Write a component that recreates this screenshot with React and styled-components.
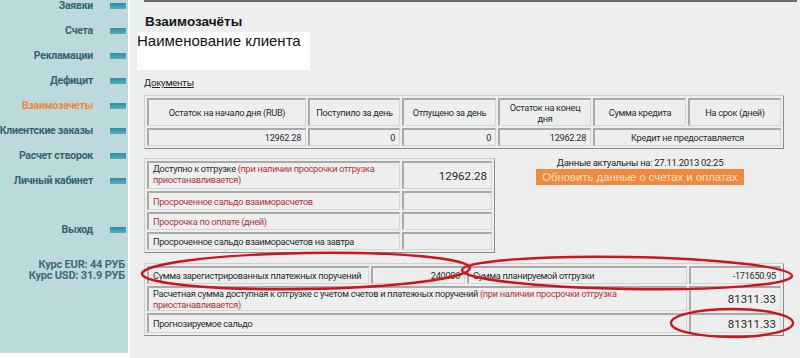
import React from 'react'
import styled, { createGlobalStyle } from 'styled-components'

const GlobalStyle = createGlobalStyle`
  body {
    margin: 0;
    background: #ffffff;
    font-family: Roboto, "Liberation Sans", Arial, sans-serif;
  }
`

const menu = [
  { name: 'Заявки' },
  { name: 'Счета' },
  { name: 'Рекламации' },
  { name: 'Дефицит' },
  { name: 'Взаимозачеты', active: true },
  { name: 'Клиентские заказы' },
  { name: 'Расчет створок' },
  { name: 'Личный кабинет' },
]

const balanceHead = [
  'Остаток на начало дня (RUB)',
  'Поступило за день',
  'Отпущено за день',
  'Остаток на конец дня',
  'Сумма кредита',
  'На срок (дней)',
]

const Page = styled.div`
  position: relative;
  width: 800px;
  height: 358px;
  overflow: hidden;
  display: flex;
`

const Sidebar = styled.aside`
  width: 128px;
  height: 353px;
  background: #bcdadb;
  display: flex;
  flex-direction: column;
`

const Menu = styled.ul`
  list-style: none;
  margin: -7px 0 0 0;
  padding: 0;
`

const MenuItem = styled.li`
  height: 25px;
  display: flex;
  align-items: center;
  justify-content: flex-end;
  gap: 17px;
  padding-right: 2px;
  font-size: 10.5px;
  font-weight: bold;
  letter-spacing: -0.25px;
  white-space: nowrap;
  color: ${p => (p.$active ? '#e8873c' : '#35636f')};
`

const Marker = styled.span`
  flex: none;
  width: 16px;
  height: 6px;
  background: linear-gradient(#2f8ea2, #55aebd);
`

const Exit = styled(MenuItem)`
  margin-top: 24px;
`

const Rates = styled.div`
  margin-top: 17px;
  padding-right: 3px;
  text-align: right;
  font-size: 11px;
  font-weight: bold;
  letter-spacing: -0.2px;
  line-height: 11px;
  color: #3e6b77;
`

const Main = styled.main`
  flex: 1;
  margin-left: 2px;
  height: 358px;
  background: #edefef;
  padding: 0 15px 0 14px;
  box-sizing: border-box;
`

const TopRule = styled.div`
  height: 2px;
  background: #6a6a6a;
  margin-right: -12px;
`

const Title = styled.h1`
  margin: 11px 0 0 1px;
  font-family: "Liberation Sans", Arial, sans-serif;
  font-size: 13.5px;
  font-weight: bold;
  line-height: 17px;
  color: #151515;
`

const ClientBox = styled.div`
  margin: 2px 0 0 -7px;
  width: 173px;
  height: 38px;
  background: #ffffff;
  font-family: "Liberation Sans", Arial, sans-serif;
  font-size: 15px;
  line-height: 17px;
  color: #111;
`

const DocLink = styled.a`
  display: inline-block;
  margin-top: 7px;
  font-size: 9.5px;
  letter-spacing: -0.2px;
  color: #222;
  text-decoration: underline;
`

const Grid = styled.table`
  width: ${p => p.$width}px;
  margin-top: ${p => p.$top}px;
  table-layout: fixed;
  border-collapse: separate;
  border-spacing: 2px;
  border: 1px solid;
  border-color: #cfcfcf #8a8a8a #8a8a8a #cfcfcf;
  font-size: 9.2px;
  color: #2a2a2a;
`

const Cell = styled.td`
  height: ${p => p.$h || 15}px;
  padding: 0 4px;
  border: 1px solid;
  border-width: 2px 1px 1px 2px;
  border-color: #a9a9a9 #d4d4d4 #d4d4d4 #a9a9a9;
  text-align: ${p => p.$align || 'left'};
  vertical-align: ${p => p.$valign || 'middle'};
  font-size: ${p => (p.$big ? 11.5 : 9.2)}px;
  letter-spacing: ${p => (p.$big ? 0 : -0.3)}px;
  line-height: ${p => (p.$big ? 14 : 11)}px;
  white-space: ${p => (p.$nowrap ? 'nowrap' : 'normal')};
  color: ${p => (p.$warn ? '#b2323c' : '#2a2a2a')};
`

const Note = styled.span`
  color: #b2323c;
`

const Split = styled.div`
  display: flex;
  align-items: flex-start;
`

const Status = styled.div`
  flex: 1;
  padding-top: 8px;
  display: flex;
  flex-direction: column;
  align-items: center;
  font-size: 9.5px;
  letter-spacing: -0.3px;
  color: #1e1e1e;
`

const Refresh = styled.button`
  margin-top: 1px;
  width: 208px;
  height: 16px;
  padding: 0;
  border: none;
  background: #f0893b;
  color: #fde3cc;
  font-family: "Liberation Sans", Arial, sans-serif;
  font-size: 11.3px;
  line-height: 16px;
`

const Marks = styled.svg`
  position: absolute;
  left: 0;
  top: 0;
  pointer-events: none;
`

export default function App() {
  return (
    <Page>
      <GlobalStyle />
      <Sidebar>
        <Menu>
          {menu.map(m => (
            <MenuItem key={m.name} $active={m.active}>
              {m.name}
              <Marker />
            </MenuItem>
          ))}
          <Exit>
            Выход
            <Marker />
          </Exit>
        </Menu>
        <Rates>
          Курс EUR: 44 РУБ
          <br />
          Курс USD: 31.9 РУБ
        </Rates>
      </Sidebar>

      <Main>
        <TopRule />
        <Title>Взаимозачёты</Title>
        <ClientBox>Наименование клиента</ClientBox>
        <DocLink>Документы</DocLink>

        <Grid $width={640} $top={5}>
          <colgroup>
            <col style={{ width: 159 }} />
            <col style={{ width: 92 }} />
            <col style={{ width: 94 }} />
            <col style={{ width: 93 }} />
            <col style={{ width: 93 }} />
            <col />
          </colgroup>
          <tbody>
            <tr>
              {balanceHead.map(h => (
                <Cell key={h} $h={25} $align="center">{h}</Cell>
              ))}
            </tr>
            <tr>
              <Cell $align="right">12962.28</Cell>
              <Cell $align="right">0</Cell>
              <Cell $align="right">0</Cell>
              <Cell $align="right">12962.28</Cell>
              <Cell colSpan={2} $align="center">Кредит не предоставляется</Cell>
            </tr>
          </tbody>
        </Grid>

        <Split>
          <Grid $width={351} $top={9}>
            <colgroup>
              <col style={{ width: 253 }} />
              <col />
            </colgroup>
            <tbody>
              <tr>
                <Cell $h={25} $valign="top">
                  Доступно к отгрузке <Note>(при наличии просрочки отгрузка приостанавливается)</Note>
                </Cell>
                <Cell $align="right" $big>12962.28</Cell>
              </tr>
              <tr>
                <Cell $h={16} $warn>Просроченное сальдо взаиморасчетов</Cell>
                <Cell />
              </tr>
              <tr>
                <Cell $warn>Просрочка по оплате (дней)</Cell>
                <Cell />
              </tr>
              <tr>
                <Cell $h={13}>Просроченное сальдо взаиморасчетов на завтра</Cell>
                <Cell />
              </tr>
            </tbody>
          </Grid>
          <Status>
            Данные актуальны на: 27.11.2013 02:25
            <Refresh>Обновить данные о счетах и оплатах</Refresh>
          </Status>
        </Split>

        <Grid $width={640} $top={10}>
          <colgroup>
            <col style={{ width: 222 }} />
            <col style={{ width: 94 }} />
            <col style={{ width: 220 }} />
            <col />
          </colgroup>
          <tbody>
            <tr>
              <Cell $h={13} $nowrap>Сумма зарегистрированных платежных поручений</Cell>
              <Cell $align="right">240000</Cell>
              <Cell>Сумма планируемой отгрузки</Cell>
              <Cell $align="right">-171650.95</Cell>
            </tr>
            <tr>
              <Cell colSpan={3} $h={22} $valign="top">
                Расчетная сумма доступная к отгрузке с учетом счетов и платежных поручений{' '}
                <Note>(при наличии просрочки отгрузка приостанавливается)</Note>
              </Cell>
              <Cell $align="right" $big>81311.33</Cell>
            </tr>
            <tr>
              <Cell colSpan={3} $h={17}>Прогнозируемое сальдо</Cell>
              <Cell $align="right" $big>81311.33</Cell>
            </tr>
          </tbody>
        </Grid>
      </Main>

      <Marks width="800" height="358" viewBox="0 0 800 358">
        <g fill="none" stroke="#d0141c" strokeWidth="2.4">
          <ellipse cx="306" cy="271" rx="164" ry="18" transform="rotate(-1 306 271)" />
          <ellipse cx="627" cy="273" rx="165" ry="16" transform="rotate(1 627 273)" />
          <ellipse cx="732" cy="323" rx="61" ry="14" />
        </g>
      </Marks>
    </Page>
  )
}
